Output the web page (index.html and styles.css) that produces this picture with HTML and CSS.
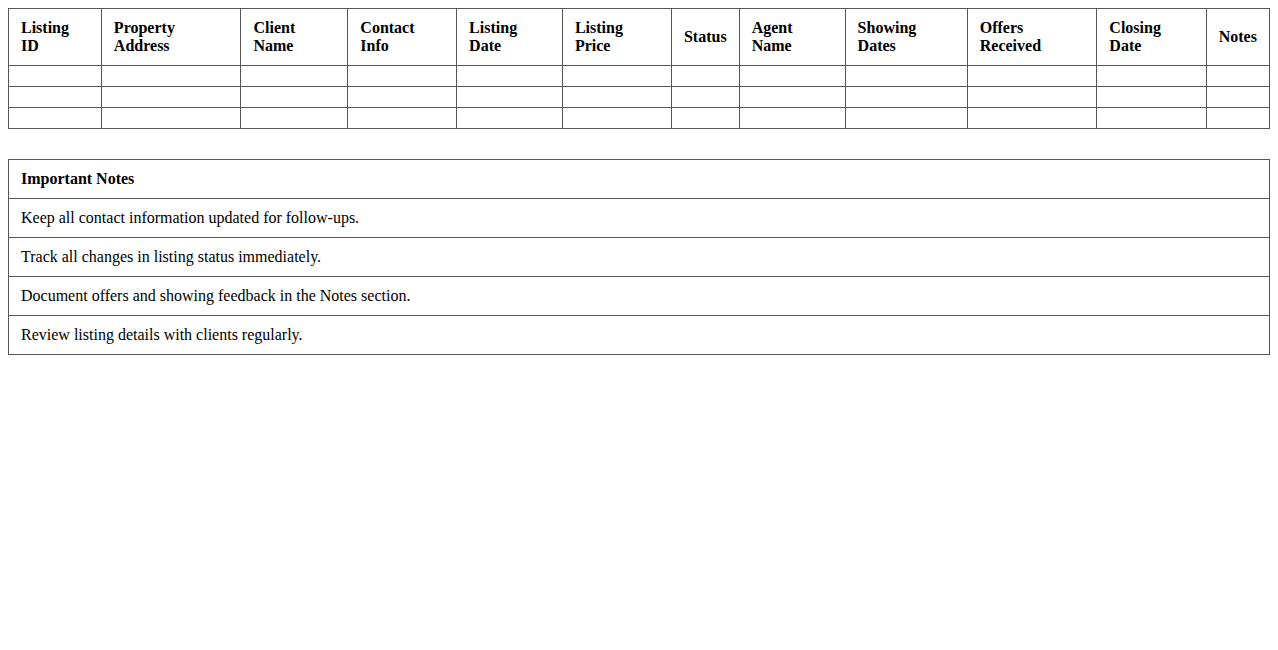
FILE: index.html
```html
<!DOCTYPE html>
<html>
<head>
<meta charset="utf-8">
<link rel="stylesheet" href="styles.css">
</head>
<body>
<table class="grid">
  <thead>
    <tr>
      <th>Listing ID</th>
      <th>Property Address</th>
      <th>Client Name</th>
      <th>Contact Info</th>
      <th>Listing Date</th>
      <th>Listing Price</th>
      <th>Status</th>
      <th>Agent Name</th>
      <th>Showing Dates</th>
      <th>Offers Received</th>
      <th>Closing Date</th>
      <th>Notes</th>
    </tr>
  </thead>
  <tbody>
    <tr><td></td><td></td><td></td><td></td><td></td><td></td><td></td><td></td><td></td><td></td><td></td><td></td></tr>
    <tr><td></td><td></td><td></td><td></td><td></td><td></td><td></td><td></td><td></td><td></td><td></td><td></td></tr>
    <tr><td></td><td></td><td></td><td></td><td></td><td></td><td></td><td></td><td></td><td></td><td></td><td></td></tr>
  </tbody>
</table>
<table class="grid notes">
  <thead>
    <tr><th>Important Notes</th></tr>
  </thead>
  <tbody>
    <tr><td>Keep all contact information updated for follow-ups.</td></tr>
    <tr><td>Track all changes in listing status immediately.</td></tr>
    <tr><td>Document offers and showing feedback in the Notes section.</td></tr>
    <tr><td>Review listing details with clients regularly.</td></tr>
  </tbody>
</table>
</body>
</html>
```
FILE: styles.css
```css
body {
  margin: 8px;
  font-family: "Liberation Serif", "Times New Roman", serif;
  font-size: 16px;
  color: #000;
  background: #fff;
}
.grid {
  width: 100%;
  border-collapse: collapse;
}
.grid th,
.grid td {
  border: 1px solid #555;
  padding: 10px 12px;
  text-align: left;
  vertical-align: middle;
}
.grid th {
  font-weight: bold;
}
.notes {
  margin-top: 30px;
}
```
